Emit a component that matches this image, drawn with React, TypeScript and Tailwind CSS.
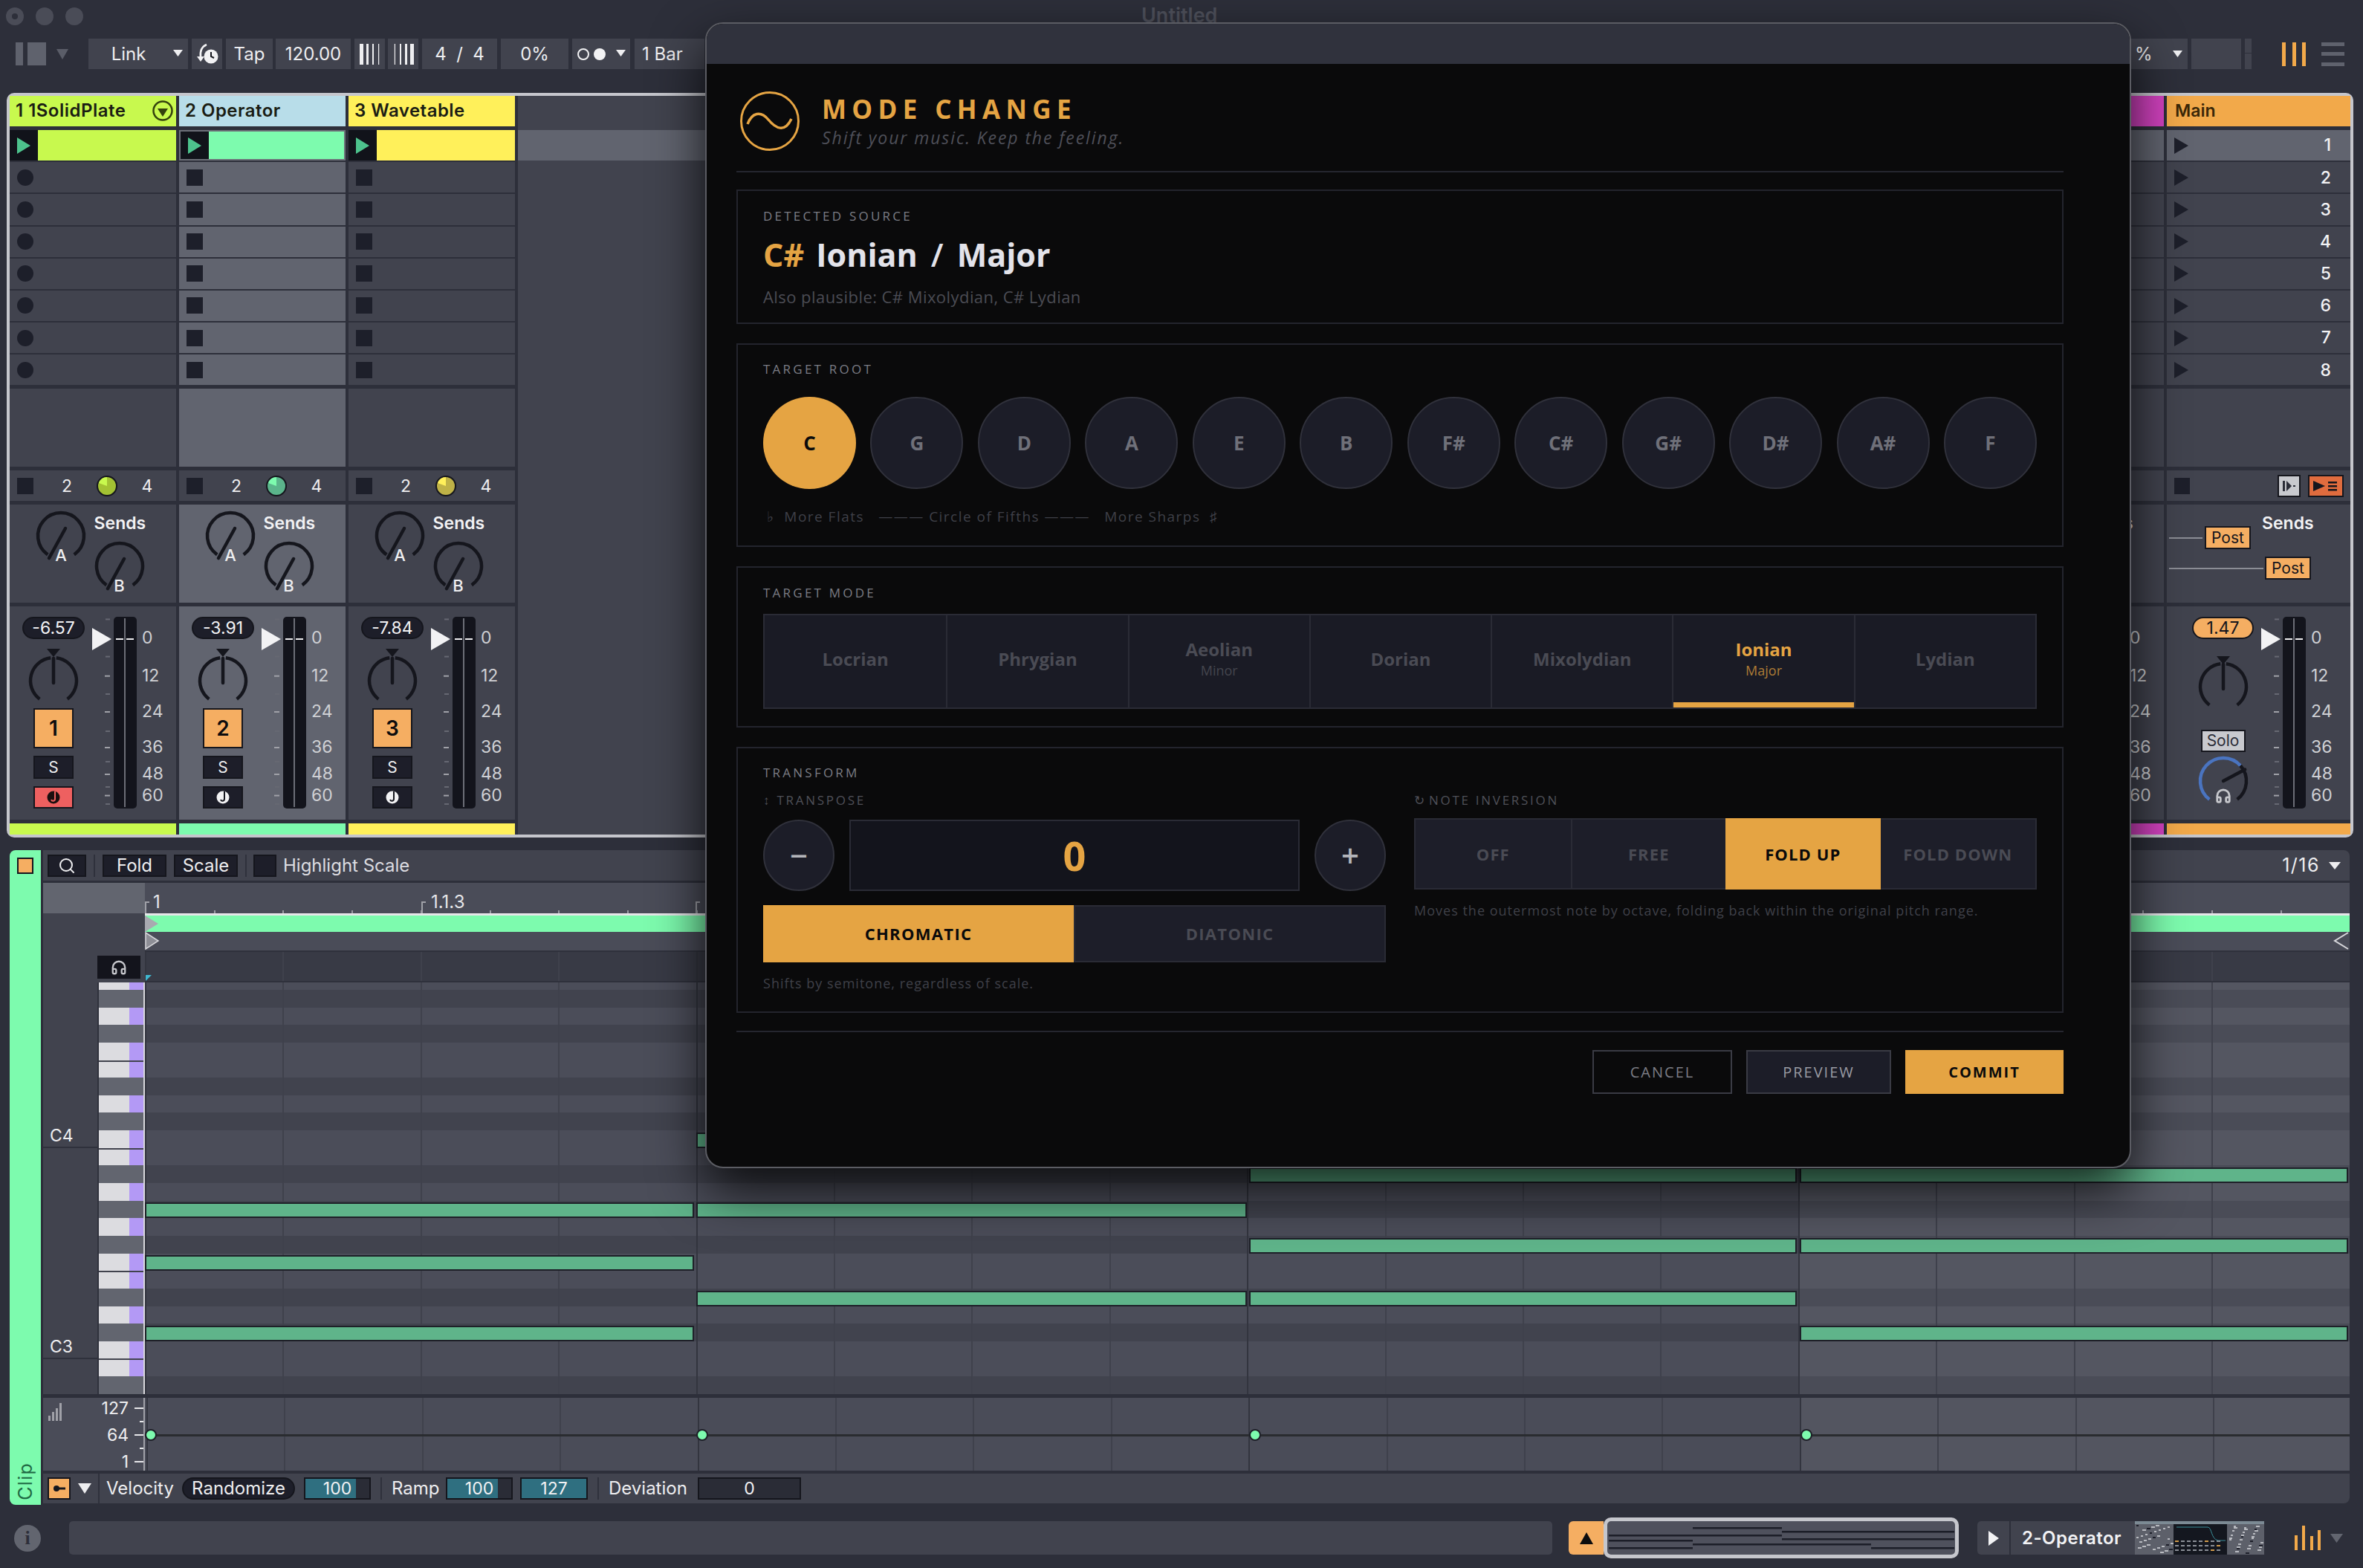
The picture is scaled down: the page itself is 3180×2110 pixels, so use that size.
import React from 'react';
import { Headphones, Search } from 'lucide-react';

// palette
const LIME = '#c8f94e';
const MINT = '#7dfbae';
const YELLOW = '#fff05a';

interface TrackInfo {
  num: string;
  name: string;
  header: string;
  clip: string;
  vol: string;
  slot: 'dot' | 'square' | 'none';
  selected?: boolean;
  armed?: boolean;
  disc: string;
  discHi: string;
}

const tracks: TrackInfo[] = [
  { num: '1', name: '1 1SolidPlate', header: LIME, clip: LIME, vol: '-6.57', slot: 'dot', armed: true, disc: '#a3c233', discHi: '#c8f94e' },
  { num: '2', name: '2 Operator', header: '#b8dde9', clip: MINT, vol: '-3.91', slot: 'square', selected: true, disc: '#5bb48b', discHi: '#7dfbae' },
  { num: '3', name: '3 Wavetable', header: YELLOW, clip: YELLOW, vol: '-7.84', slot: 'square', disc: '#bfb247', discHi: '#fff05a' },
];

const roots = ['C', 'G', 'D', 'A', 'E', 'B', 'F#', 'C#', 'G#', 'D#', 'A#', 'F'];
const modes = [
  { name: 'Locrian' },
  { name: 'Phrygian' },
  { name: 'Aeolian', sub: 'Minor' },
  { name: 'Dorian' },
  { name: 'Mixolydian' },
  { name: 'Ionian', sub: 'Major', active: true },
  { name: 'Lydian' },
];
const inversions = ['OFF', 'FREE', 'FOLD UP', 'FOLD DOWN'];

const keyRows = ['w', 'b', 'w', 'b', 'w', 'w', 'b', 'w', 'b', 'w', 'w', 'b', 'w', 'b', 'w', 'b', 'w', 'w', 'b', 'w', 'b', 'w', 'w', 'b'];
const ROW_H = 23.65;

// [row index, left, width] relative to the grid
const notes: [number, number, number][] = [
  [9, 742, 741],
  [11, 1486, 737],
  [11, 2227, 738],
  [13, 0, 739],
  [13, 742, 741],
  [15, 1486, 737],
  [15, 2227, 738],
  [16, 0, 739],
  [18, 742, 741],
  [18, 1486, 737],
  [20, 0, 739],
  [20, 2227, 738],
];

const dbLabels = [
  { t: '0', y: 28 },
  { t: '12', y: 79 },
  { t: '24', y: 127 },
  { t: '36', y: 175 },
  { t: '48', y: 211 },
  { t: '60', y: 240 },
];
const minorTicks = [3.4, 53.6, 104, 154, 195, 229, 252];
const majorTicks = [79.7, 128, 176, 212, 240.6];

function polar(cx: number, cy: number, r: number, deg: number) {
  const a = ((deg - 90) * Math.PI) / 180;
  return [cx + r * Math.cos(a), cy + r * Math.sin(a)];
}

function arc(cx: number, cy: number, r: number, from: number, to: number) {
  const [x1, y1] = polar(cx, cy, r, from);
  const [x2, y2] = polar(cx, cy, r, to);
  const large = to - from > 180 ? 1 : 0;
  return `M${x1} ${y1} A${r} ${r} 0 ${large} 1 ${x2} ${y2}`;
}

const Knob: React.FC<{ letter: string }> = ({ letter }) => {
  const [px, py] = polar(36, 36, 34, -152);
  return (
    <div className="relative w-[72px] h-[72px]">
      <svg width="72" height="72" fill="none" stroke="#15161d" strokeWidth="4.5">
        <path d={arc(36, 36, 31, -145, 145)} />
        <line x1="42" y1="26" x2={px} y2={py} strokeLinecap="round" />
      </svg>
      <span className="absolute left-0 right-0 top-[49px] text-center text-[22px] leading-[26px] font-medium text-[#eeeef0]">
        {letter}
      </span>
    </div>
  );
};

const PanKnob: React.FC<{ triTop: number; cy: number }> = ({ triTop, cy }) => (
  <svg width="84" height="83" fill="none" stroke="#15161d" strokeWidth="4.5">
    <polygon points={`33,${triTop} 51,${triTop} 42,${triTop + 11}`} fill="#15161d" stroke="none" />
    <path d={arc(42, cy, 31, -143, -7)} />
    <path d={arc(42, cy, 31, 7, 143)} />
    <line x1="42" y1={cy - 30} x2="42" y2={cy + 3} strokeLinecap="round" />
  </svg>
);

const CueKnob: React.FC = () => {
  const [px, py] = polar(42, 35, 33, 62);
  return (
    <div className="relative w-[84px] h-[72px]">
      <svg width="84" height="72" fill="none" strokeWidth="4.5">
        <path d={arc(42, 35, 31, -143, 48)} stroke="#4a74c0" />
        <path d={arc(42, 35, 31, 48, 143)} stroke="#15161d" />
        <line x1="42" y1="35" x2={px} y2={py} stroke="#15161d" strokeLinecap="round" />
      </svg>
      <Headphones className="absolute left-[31px] top-[44px] text-[#c6c7cc]" size={22} strokeWidth={3} />
    </div>
  );
};

const Meter: React.FC = () => (
  <div className="relative w-[31px] h-[258px] rounded-[5px] bg-[#13141c]">
    <div className="absolute left-[14px] top-[2px] bottom-[2px] w-[2px] bg-[#6c6e77]" />
    <div className="absolute left-[3px] top-[29px] w-[10px] h-[2px] bg-[#eeeef0]" />
    <div className="absolute left-[17px] top-[29px] w-[10px] h-[2px] bg-[#eeeef0]" />
  </div>
);

const FaderScale: React.FC = () => (
  <>
    <svg width="29" height="258" className="shrink-0">
      {minorTicks.map((y) => (
        <rect key={y} x="18" y={y - 1} width="6" height="2" fill="#666872" />
      ))}
      {majorTicks.map((y) => (
        <rect key={y} x="17" y={y - 1} width="7" height="2" fill="#a0a1a8" />
      ))}
      <polygon points="0,15 0,45 26,30" fill="#f2f2f4" />
    </svg>
    <Meter />
    <div className="relative w-[40px] h-[258px] ml-[7px]">
      {dbLabels.map((l) => (
        <span
          key={l.t}
          className="absolute left-0 text-[23px] leading-[26px] text-[#cfd0d4]"
          style={{ top: l.y - 13 }}
        >
          {l.t}
        </span>
      ))}
    </div>
  </>
);

const NoteIcon: React.FC<{ red?: boolean }> = ({ red }) => (
  <svg width="20" height="22" viewBox="0 0 20 22">
    <circle cx="10" cy="11" r="8.5" fill={red ? '#1a0f0f' : '#f2f2f4'} />
    <path d="M12 3 L12 13 C12 16 8 17 7 14" fill="none" stroke={red ? '#ee6060' : '#15161d'} strokeWidth="2" />
  </svg>
);

const Slots: React.FC<{ kind: TrackInfo['slot']; bg: string }> = ({ kind, bg }) => (
  <div className="flex flex-col gap-[2px]">
    {[1, 2, 3, 4, 5, 6, 7].map((i) => (
      <div key={i} className={`h-[41.2px] flex items-center pl-[10px] ${bg}`}>
        {kind === 'dot' && <div className="w-[22px] h-[22px] rounded-full bg-[#1d1f2a]" />}
        {kind === 'square' && <div className="w-[22px] h-[22px] bg-[#1d1f2a]" />}
      </div>
    ))}
  </div>
);

const TrackColumn: React.FC<{ t: TrackInfo }> = ({ t }) => {
  const bg = t.selected ? 'bg-[#61646f]' : 'bg-[#41434e]';
  return (
    <div className="w-[224px] shrink-0 flex flex-col font-[Inter,sans-serif]">
      <div className="h-[41px] flex items-center pl-[8px] pr-[3px] justify-between" style={{ background: t.header }}>
        <span className="text-[24px] font-semibold tracking-[0.02em] text-[#1b1d14]">{t.name}</span>
        {t.num === '1' && (
          <svg width="30" height="30">
            <circle cx="15" cy="15" r="12.5" fill="none" stroke="#34420d" strokeWidth="2.5" />
            <polygon points="8,12 22,12 15,23" fill="#34420d" />
          </svg>
        )}
      </div>
      <div className={`h-[41.2px] mt-[5px] flex ${t.selected ? 'bg-[#6d7079] p-[2px]' : ''}`}>
        <div className="w-[38px] shrink-0 bg-[#11131a] flex items-center justify-center">
          <svg width="20" height="24"><polygon points="1,1 1,23 19,12" fill="#4dc38d" /></svg>
        </div>
        <div className="flex-1" style={{ background: t.clip }} />
      </div>
      <div className="mt-[2px]">
        <Slots kind={t.slot} bg={bg} />
      </div>
      <div className={`h-[105px] mt-[5px] ${bg}`} />
      <div className="h-[41px] mt-[5px] flex items-center pl-[10px] bg-[#41434e]">
        <div className="w-[22px] h-[22px] bg-[#1d1f2a]" />
        <span className="ml-[35px] w-[20px] text-center text-[23px] text-[#eeeef0]">2</span>
        <svg width="30" height="30" className="ml-[29px]">
          <circle cx="15" cy="15" r="13" fill={t.disc} stroke="#15161d" strokeWidth="2" />
          <path d="M15 15 L15 3 A12 12 0 0 0 4 11 Z" fill={t.discHi} />
        </svg>
        <span className="ml-[29px] w-[20px] text-center text-[23px] text-[#eeeef0]">4</span>
      </div>
      <div className={`h-[132.5px] mt-[4.5px] flex ${bg}`}>
        <div className="ml-[33px] mt-[6.5px]">
          <Knob letter="A" />
        </div>
        <div className="ml-[6.6px] flex flex-col">
          <span className="mt-[11.5px] pl-[2px] h-[28px] text-[23px] leading-[28px] font-semibold text-[#f2f2f4]">Sends</span>
          <div className="mt-[8px]">
            <Knob letter="B" />
          </div>
        </div>
      </div>
      <div className={`h-[287px] mt-[5px] pt-[14px] pl-[17px] flex ${bg}`}>
        <div className="w-[84px] flex flex-col items-center">
          <div className="w-[84px] h-[30px] rounded-full bg-[#1d1e29] border-2 border-[#15161d] flex items-center justify-center text-[23px] text-[#f2f2f4]">
            {t.vol}
          </div>
          <div className="mt-[8px]">
            <PanKnob triTop={5} cy={48} />
          </div>
          <div className="mt-[2px] w-[54px] h-[54px] bg-[#f5ae62] border-2 border-[#15161d] flex items-center justify-center text-[28px] font-semibold text-[#0c0c0e]">
            {t.num}
          </div>
          <div className="mt-[10px] w-[54px] h-[31px] bg-[#1d1e29] border-2 border-[#15161d] flex items-center justify-center text-[21px] text-[#eeeef0]">
            S
          </div>
          <div className={`mt-[10px] w-[54px] h-[30px] border-2 border-[#15161d] flex items-center justify-center ${t.armed ? 'bg-[#ee6060]' : 'bg-[#1d1e29]'}`}>
            <NoteIcon red={t.armed} />
          </div>
        </div>
        <div className="ml-[10px] flex">
          <FaderScale />
        </div>
      </div>
      <div className="h-[15px] mt-[5px]" style={{ background: t.clip }} />
    </div>
  );
};

const PinkColumn: React.FC = () => (
  <div className="w-[224px] shrink-0 flex flex-col font-[Inter,sans-serif]">
    <div className="h-[41px] bg-[#d342c0]" />
    <div className="h-[41.2px] mt-[5px] bg-[#61646f]" />
    <div className="mt-[2px]">
      <Slots kind="none" bg="bg-[#41434e]" />
    </div>
    <div className="h-[105px] mt-[5px] bg-[#41434e]" />
    <div className="h-[41px] mt-[5px] bg-[#41434e]" />
    <div className="h-[132.5px] mt-[4.5px] bg-[#41434e] flex">
      <span className="ml-[113px] mt-[11.5px] h-[28px] text-[23px] leading-[28px] font-semibold text-[#f2f2f4]">Sends</span>
    </div>
    <div className="h-[287px] mt-[5px] pt-[14px] pl-[111px] flex bg-[#41434e]">
      <FaderScale />
    </div>
    <div className="h-[15px] mt-[5px] bg-[#d342c0]" />
  </div>
);

const MainColumn: React.FC = () => (
  <div className="w-[247px] shrink-0 flex flex-col font-[Inter,sans-serif]">
    <div className="h-[41px] bg-[#f2a94a] flex items-center pl-[11px] text-[23px] font-semibold text-[#3a2708]">Main</div>
    <div className="mt-[5px] flex flex-col gap-[2px]">
      {[1, 2, 3, 4, 5, 6, 7, 8].map((n) => (
        <div
          key={n}
          className={`h-[41.2px] flex items-center justify-between pl-[10px] pr-[26px] ${n === 1 ? 'bg-[#61646f]' : 'bg-[#41434e]'}`}
        >
          <svg width="19" height="24"><polygon points="0,1 0,23 19,12" fill="#1d1f2a" /></svg>
          <span className="text-[23px] font-medium text-[#f2f2f4]">{n}</span>
        </div>
      ))}
    </div>
    <div className="h-[105px] mt-[5px] bg-[#41434e]" />
    <div className="h-[41px] mt-[5px] bg-[#41434e] flex items-center pl-[10px] pr-[9px]">
      <div className="w-[21px] h-[22px] bg-[#1d1f2a]" />
      <div className="ml-auto w-[31px] h-[30px] bg-[#c8c9ce] border-2 border-[#15161d] flex items-center justify-center">
        <svg width="22" height="18" fill="#2b2d38">
          <rect x="2" y="2" width="3" height="14" />
          <polygon points="7,2 14,9 7,16" />
          <rect x="16" y="8" width="3" height="2" />
        </svg>
      </div>
      <div className="ml-[10px] w-[48px] h-[30px] bg-[#e06c3e] border-2 border-[#15161d] flex items-center justify-center">
        <svg width="38" height="18" fill="#15161d">
          <polygon points="2,2 2,16 18,9" />
          <rect x="22" y="3" width="12" height="2.5" />
          <rect x="22" y="8" width="12" height="2.5" />
          <rect x="22" y="13" width="12" height="2.5" />
        </svg>
      </div>
    </div>
    <div className="h-[132.5px] mt-[4.5px] bg-[#41434e] flex flex-col pl-[3px]">
      <div className="relative h-full">
        <span className="absolute left-[125px] top-[11.5px] text-[23px] leading-[28px] font-semibold text-[#f2f2f4]">Sends</span>
        <div className="absolute left-0 top-[44px] w-[45px] h-[2px] bg-[#8b8d95]" />
        <div className="absolute left-[48px] top-[29.5px] w-[62px] h-[31px] bg-[#f5ae62] border-2 border-[#15161d] flex items-center justify-center text-[21px] text-[#15161d]">Post</div>
        <div className="absolute left-0 top-[85px] w-[127px] h-[2px] bg-[#8b8d95]" />
        <div className="absolute left-[129px] top-[70px] w-[62px] h-[31px] bg-[#f5ae62] border-2 border-[#15161d] flex items-center justify-center text-[21px] text-[#15161d]">Post</div>
      </div>
    </div>
    <div className="h-[287px] mt-[5px] pt-[14px] pl-[34px] flex bg-[#41434e]">
      <div className="w-[83px] flex flex-col items-center">
        <div className="w-[83px] h-[30px] rounded-full bg-[#f5ae62] border-2 border-[#15161d] flex items-center justify-center text-[23px] text-[#15161d]">1.47</div>
        <div className="mt-[8px]">
          <PanKnob triTop={15} cy={56} />
        </div>
        <div className="mt-[31px] w-[60px] h-[30px] bg-[#c8c9ce] border-2 border-[#15161d] flex items-center justify-center text-[21px] text-[#2b2d38]">Solo</div>
        <div className="mt-[4px]">
          <CueKnob />
        </div>
      </div>
      <div className="ml-[10px] flex">
        <FaderScale />
      </div>
    </div>
    <div className="h-[15px] mt-[5px] bg-[#f2a94a]" />
  </div>
);

const Chip: React.FC<{ w: string; children?: React.ReactNode; className?: string }> = ({ w, children, className = '' }) => (
  <div className={`${w} h-[41px] bg-[#41434e] flex items-center justify-center text-[24px] text-[#eeeef0] ${className}`}>{children}</div>
);

const Caret: React.FC<{ className?: string }> = ({ className }) => (
  <svg width="13" height="9" className={className}><polygon points="0,0 13,0 6.5,9" fill="#eeeef0" /></svg>
);

const BarsIcon: React.FC<{ flip?: boolean }> = ({ flip }) => (
  <svg width="28" height="28" className={flip ? '-scale-x-100' : ''}>
    <rect x="0" y="0" width="5" height="28" fill="#eeeef0" />
    <rect x="9" y="0" width="3" height="28" fill="#eeeef0" />
    <rect x="17" y="0" width="2" height="28" fill="#eeeef0" />
    <rect x="25" y="0" width="1.2" height="28" fill="#eeeef0" />
  </svg>
);

const Toolbar: React.FC = () => (
  <div className="h-[41px] flex items-center font-[Inter,sans-serif]">
    <div className="ml-[21px] w-[98px] flex items-center">
      <div className="w-[10px] h-[31px] bg-[#5f626d]" />
      <div className="w-[25px] h-[31px] ml-[6px] bg-[#5f626d]" />
      <svg width="16" height="14" className="ml-[14px]"><polygon points="0,0 16,0 8,14" fill="#5a5d68" /></svg>
    </div>
    <Chip w="w-[134px]" className="relative pr-[26px]">
      Link
      <Caret className="absolute right-[7px] top-[15px]" />
    </Chip>
    <Chip w="w-[41px] ml-[5px]">
      <svg width="34" height="34" fill="none">
        <circle cx="22" cy="20" r="9.5" fill="#f2f2f4" />
        <path d="M22 14 V20 L26 22" stroke="#15161d" strokeWidth="2" />
        <path d="M16 4 C9 7 7 13 8 21" stroke="#f2f2f4" strokeWidth="2.5" />
        <polygon points="3,20 13,20 8,27" fill="#f2f2f4" />
      </svg>
    </Chip>
    <Chip w="w-[63px] ml-[5px]">Tap</Chip>
    <Chip w="w-[101px] ml-[4px]">120.00</Chip>
    <Chip w="w-[41px] ml-[5px]"><BarsIcon /></Chip>
    <Chip w="w-[41px] ml-[4px]"><BarsIcon flip /></Chip>
    <Chip w="w-[101px] ml-[5px]"><span className="whitespace-pre">4  /  4</span></Chip>
    <Chip w="w-[91px] ml-[5px]">0%</Chip>
    <Chip w="w-[78px] ml-[5px] relative">
      <svg width="40" height="18" className="absolute left-[7px] top-[12px]" fill="none">
        <circle cx="8" cy="9" r="7" stroke="#f2f2f4" strokeWidth="2" />
        <circle cx="30" cy="9" r="8" fill="#f2f2f4" />
      </svg>
      <Caret className="absolute right-[6px] top-[15px]" />
    </Chip>
    <Chip w="w-[94px] ml-[6px] justify-start pl-[10px]">1 Bar</Chip>
    <div className="flex-1" />
    <Chip w="w-[90px] justify-start pl-[19px] relative">
      %
      <Caret className="absolute right-[7px] top-[16px]" />
    </Chip>
    <Chip w="w-[67px] ml-[5px]" />
    <div className="ml-[5px] w-[9px] h-[41px] flex flex-col gap-[1px]">
      <div className="h-[19px] bg-[#41434e]" />
      <div className="flex-1 bg-[#41434e]" />
    </div>
    <div className="ml-[41px] w-[32px] h-[32px] flex justify-between">
      <div className="w-[5px] bg-[#f2a94a]" />
      <div className="w-[5px] bg-[#f2a94a]" />
      <div className="w-[5px] bg-[#f2a94a]" />
    </div>
    <div className="ml-[21px] w-[31px] h-[32px] flex flex-col justify-between">
      <div className="h-[5px] bg-[#5f626d]" />
      <div className="h-[5px] bg-[#5f626d]" />
      <div className="h-[5px] bg-[#5f626d]" />
    </div>
    <div className="w-[25px]" />
  </div>
);

const GridLines: React.FC = () => (
  <>
    {Array.from({ length: 16 }, (_, i) => (
      <div
        key={i}
        className={`absolute top-0 bottom-0 w-[2px] ${i % 4 === 0 ? 'bg-[#33353f]' : 'bg-[#3f414c]'}`}
        style={{ left: i * 185.4 }}
      />
    ))}
  </>
);

const NoteGrid: React.FC = () => (
  <div className="relative flex-1 h-[554px] flex flex-col overflow-hidden">
    {keyRows.map((k, i) => (
      <div
        key={i}
        className={`w-full ${k === 'w' ? 'bg-[#4b4d59]' : 'bg-[#41434e]'} ${i === 0 ? 'h-[10px]' : 'h-[23.65px]'}`}
      />
    ))}
    <div className="absolute top-0 bottom-0 left-[2227px] right-0 bg-white/[0.05]" />
    <GridLines />
    {notes.map(([row, left, width], i) => (
      <div
        key={i}
        className="absolute h-[21px] bg-[#5fb48a] border-2 border-[#1e2028]"
        style={{ top: 10 + (row - 1) * ROW_H + 2.5, left, width }}
      />
    ))}
  </div>
);

const PianoKeys: React.FC = () => (
  <div className="w-[60px] shrink-0 flex flex-col">
    {keyRows.map((k, i) => {
      const whiteAfterWhite = i > 0 && k === 'w' && keyRows[i - 1] === 'w';
      return (
        <div
          key={i}
          className={`flex ${i === 0 ? 'h-[10px]' : 'h-[23.65px]'} ${whiteAfterWhite ? 'border-t-2 border-[#41434e]' : ''}`}
        >
          {k === 'w' ? (
            <>
              <div className="w-[41px] bg-[#dcdce0]" />
              <div className="flex-1 bg-[#b399f5]" />
            </>
          ) : (
            <div className="flex-1 bg-[#62656f]" />
          )}
        </div>
      );
    })}
  </div>
);

const ValueField: React.FC<{ v: string; w: string; fill: string }> = ({ v, w, fill }) => (
  <div className={`relative ${w} h-[30px] bg-[#2a2c36] border-2 border-[#15161d] flex items-center justify-center text-[23px] text-[#f2f2f4]`}>
    <div className={`absolute left-0 top-0 bottom-0 bg-[#2f6f80] ${fill}`} />
    <span className="relative">{v}</span>
  </div>
);

const DetailView: React.FC = () => (
  <div className="mt-[17px] ml-[13px] w-[3149px] flex font-[Inter,sans-serif]">
    <div className="w-[42px] shrink-0 h-[881px] bg-[#7dfbae] rounded-l-[8px] flex flex-col items-center justify-between pt-[10px] pb-[6px]">
      <div className="w-[22px] h-[22px] bg-[#f5ae62] border-2 border-[#15161d]" />
      <span className="text-[25px] leading-[25px] tracking-[0.05em] text-[#1f6a44] [writing-mode:vertical-rl] rotate-180">Clip</span>
    </div>
    <div className="w-[3px]" />
    <div className="flex-1 flex flex-col">
      <div className="h-[41px] bg-[#41434e] rounded-tr-[8px] flex items-center text-[24px] text-[#eeeef0]">
        <div className="ml-[6px] w-[52px] h-[30px] bg-[#1d1e29] border-2 border-[#15161d] flex items-center justify-center">
          <Search size={24} strokeWidth={2} color="#eeeef0" />
        </div>
        <div className="ml-[10px] w-[2px] h-[30px] bg-[#2f313c]" />
        <div className="ml-[10px] w-[86px] h-[30px] bg-[#1d1e29] border-2 border-[#15161d] flex items-center justify-center">Fold</div>
        <div className="ml-[10px] w-[86px] h-[30px] bg-[#1d1e29] border-2 border-[#15161d] flex items-center justify-center">Scale</div>
        <div className="ml-[10px] w-[2px] h-[30px] bg-[#2f313c]" />
        <div className="ml-[9px] w-[31px] h-[30px] bg-[#1d1e29] border-2 border-[#15161d]" />
        <span className="ml-[9px] text-[#dcdce0]">Highlight Scale</span>
        <span className="ml-auto text-[25px] tracking-[0.06em] text-[#eeeef0]">1/16</span>
        <svg width="16" height="10" className="ml-[12px] mr-[12px]"><polygon points="0,0 16,0 8,10" fill="#eeeef0" /></svg>
      </div>
      {/* ruler */}
      <div className="mt-[3px] h-[41px] flex">
        <div className="w-[137px] bg-[#62656f]" />
        <div className="relative flex-1 bg-[#4a4c58] text-[#e6e6e9] text-[24px]">
          <span className="absolute left-[11px] top-[13px] leading-[26px]">1</span>
          <span className="absolute left-[385px] top-[13px] leading-[26px]">1.1.3</span>
          {[0, 372, 741, 1484, 2227].map((x) => (
            <div key={x} className="absolute bottom-0 w-[6px] h-[16px] border-l-2 border-t-2 border-[#a0a1a8]" style={{ left: x }} />
          ))}
          {Array.from({ length: 32 }, (_, i) => (
            <div key={i} className="absolute bottom-0 w-[2px] h-[4px] bg-[#9a9ba3]" style={{ left: i * 92.7 }} />
          ))}
        </div>
      </div>
      <div className="flex">
        <div className="w-[137px] h-[93px] bg-[#41434e] relative">
          <div className="absolute left-[73px] top-[57px] w-[58px] h-[31px] bg-[#13141c] flex items-center justify-center">
            <Headphones size={22} strokeWidth={2.5} color="#c6c7cc" />
          </div>
        </div>
        <div className="flex-1 flex flex-col">
          <div className="relative h-[25px] bg-[#7dfbae] border-t-[3px] border-[#e6e6e9]">
            <svg width="20" height="22" className="absolute left-0 top-0"><polygon points="0,0 0,22 18,11" fill="#a8a9b0" /></svg>
          </div>
          <div className="relative h-[27px] bg-[#4a4c58] border-b-2 border-[#2f313c]">
            <svg width="20" height="24" className="absolute left-0 top-0"><polygon points="1,1 1,23 18,12" fill="#8d8e96" stroke="#d8d8dc" strokeWidth="1.5" /></svg>
            <svg width="22" height="24" className="absolute right-0 top-0"><path d="M20 1 L2 12 L20 23" fill="none" stroke="#d8d8dc" strokeWidth="2" /></svg>
          </div>
          <div className="relative h-[39px] bg-[#383a45] overflow-hidden">
            <GridLines />
            <svg width="10" height="8" className="absolute left-[1px] bottom-0"><polygon points="0,0 8,0 0,8" fill="#3fb7d0" /></svg>
          </div>
          <div className="h-[2px] bg-[#2f313c]" />
        </div>
      </div>
      {/* piano roll */}
      <div className="flex h-[554px] overflow-hidden">
        <div className="w-[75px] shrink-0 flex flex-col bg-[#41434e] text-[23px] leading-[28px] text-[#eeeef0] border-r-2 border-[#2f313c]">
          <div className="h-[223px] flex items-end pl-[9px] pb-[1px] border-b-2 border-[#2f313c]">C4</div>
          <div className="h-[284px] flex items-end pl-[9px] pb-[1px] border-b-2 border-[#2f313c]">C3</div>
        </div>
        <PianoKeys />
        <div className="w-[2px] shrink-0 bg-[#d8d8dc]" />
        <NoteGrid />
      </div>
      <div className="h-[5px] bg-[#2d2f3a]" />
      {/* velocity lane */}
      <div className="h-[98px] flex bg-[#4a4c58] text-[23px] text-[#eeeef0]">
        <div className="relative w-[137px] shrink-0">
          <svg width="22" height="24" className="absolute left-[7px] top-[7px]" fill="#a0a1a8">
            <rect x="0" y="17" width="3" height="7" />
            <rect x="5" y="12" width="3" height="12" />
            <rect x="10" y="7" width="3" height="17" />
            <rect x="15" y="0" width="3" height="24" />
          </svg>
          <div className="absolute right-[22px] top-0 h-[100px] flex flex-col items-end justify-between leading-[28px]">
            <span>127</span>
            <span>64</span>
            <span>1</span>
          </div>
          <svg width="16" height="98" className="absolute right-0 top-0" fill="#e6e6e9">
            <rect x="2" y="13" width="14" height="2" />
            <rect x="9" y="31" width="7" height="2" />
            <rect x="2" y="49" width="14" height="2" />
            <rect x="9" y="67" width="7" height="2" />
            <rect x="2" y="85" width="14" height="2" />
          </svg>
        </div>
        <div className="relative flex-1 border-l-2 border-[#a0a1a8] -ml-[2px]">
          <div className="absolute top-0 bottom-0 left-[2229px] right-0 bg-white/[0.05]" />
          <div className="absolute inset-y-0 left-[2px] right-0">
            <GridLines />
          </div>
          <div className="absolute left-0 right-0 top-[49px] h-[3px] bg-[#2a2c30]" />
          {[0, 742, 1486, 2228].map((x) => (
            <div key={x} className="absolute top-[42px] w-[16px] h-[16px] rounded-full bg-[#7dfbae] border-2 border-[#1e2028]" style={{ left: x }} />
          ))}
        </div>
      </div>
      <div className="h-[4px] bg-[#2d2f3a]" />
      {/* velocity tools */}
      <div className="h-[40px] bg-[#41434e] flex items-center text-[24px] text-[#eeeef0] rounded-br-[8px]">
        <div className="ml-[6px] w-[31px] h-[30px] bg-[#f5ae62] border-2 border-[#15161d] flex items-center justify-center">
          <svg width="20" height="14"><circle cx="6" cy="7" r="4" fill="#15161d" /><rect x="6" y="5.5" width="12" height="3" fill="#15161d" /></svg>
        </div>
        <svg width="18" height="14" className="ml-[10px]"><polygon points="0,0 18,0 9,14" fill="#eeeef0" /></svg>
        <div className="ml-[9px] w-[2px] h-[40px] bg-[#2f313c]" />
        <span className="ml-[9px] w-[93px] whitespace-nowrap">Velocity</span>
        <div className="ml-[9px] w-[152px] h-[30px] rounded-full bg-[#1d1e29] border-2 border-[#15161d] flex items-center justify-center">Randomize</div>
        <div className="ml-[12px]"><ValueField v="100" w="w-[90px]" fill="w-[68px]" /></div>
        <div className="ml-[13px] w-[2px] h-[30px] bg-[#2f313c]" />
        <span className="ml-[13px] w-[62px]">Ramp</span>
        <div className="ml-[11px]"><ValueField v="100" w="w-[90px]" fill="w-[68px]" /></div>
        <div className="ml-[10px]"><ValueField v="127" w="w-[91px]" fill="w-full" /></div>
        <div className="ml-[13px] w-[2px] h-[30px] bg-[#2f313c]" />
        <span className="ml-[13px] w-[110px]">Deviation</span>
        <div className="ml-[10px]"><ValueField v="0" w="w-[139px]" fill="w-0" /></div>
      </div>
    </div>
  </div>
);

const overviewNotes: [number, number, number][] = [
  [0, 113, 26], [0, 113, 33], [0, 113, 43],
  [113, 120, 16], [113, 120, 26], [113, 120, 38],
  [233, 120, 21], [233, 120, 31], [233, 120, 38],
  [353, 112, 21], [353, 112, 31], [353, 112, 43],
];

const thumbCells = Array.from({ length: 60 }, (_, i) => i);

const DeviceThumb: React.FC = () => (
  <svg width="174" height="45" className="shrink-0">
    <rect x="0" y="0" width="52" height="45" fill="#5d606a" />
    <rect x="52" y="0" width="72" height="45" fill="#14171f" />
    <rect x="124" y="0" width="50" height="45" fill="#5d606a" />
    <rect x="0" y="0" width="174" height="4" fill="#7c8a94" />
    {thumbCells.map((i) => (
      <rect
        key={i}
        x={i % 2 === 0 ? 2 + ((i * 7) % 48) : 126 + ((i * 17) % 44)}
        y={5 + ((i * 13) % 38)}
        width={3 + (i % 3)}
        height="2"
        fill={i % 5 === 0 ? '#1d1f2a' : '#b8bac0'}
      />
    ))}
    <path d="M56 8 H98 C104 8 102 24 112 26 H122" fill="none" stroke="#3a8f9a" strokeWidth="1" />
    {thumbCells.slice(0, 24).map((i) => (
      <rect key={i} x={54 + (i % 8) * 8} y={26 + (i % 3) * 6} width="5" height="2" fill={i % 7 === 0 ? '#d09a4a' : '#8a8e96'} />
    ))}
  </svg>
);

const StatusBar: React.FC = () => (
  <div className="mt-[22px] h-[45px] flex items-center font-[Inter,sans-serif]">
    <div className="ml-[19px] w-[36px] h-[36px] rounded-full bg-[#62656f] flex items-center justify-center text-[26px] font-bold leading-none text-[#2d2f3a] font-[Liberation_Serif,serif]">
      i
    </div>
    <div className="ml-[38px] w-[1996px] h-[45px] rounded-[5px] bg-[#41434e]" />
    <div className="ml-[22px] w-[47px] h-[45px] bg-[#f5ae62] rounded-l-[6px] flex items-center justify-center">
      <svg width="18" height="16"><polygon points="9,0 18,16 0,16" fill="#0c0c0e" /></svg>
    </div>
    <div className="relative w-[478px] h-[55px] bg-[#4f515d] border-[5px] border-[#c5c6cc] rounded-[10px]">
      <svg width="468" height="45" className="absolute left-0 top-0">
        {overviewNotes.map(([x, w, y], i) => (
          <rect key={i} x={x + 2} y={y - 8} width={w} height="2.5" fill="#1c1e28" />
        ))}
      </svg>
    </div>
    <div className="ml-[25px] w-[386px] h-[45px] rounded-l-[5px] bg-[#41434e] flex items-center">
      <div className="w-[45px] h-full flex items-center justify-center border-r-2 border-[#2d2f3a]">
        <svg width="14" height="20"><polygon points="0,0 14,10 0,20" fill="#f2f2f4" /></svg>
      </div>
      <span className="ml-[15px] w-[152px] text-[24px] tracking-[0.02em] font-semibold text-[#f2f2f4]">2-Operator</span>
      <DeviceThumb />
    </div>
    <div className="ml-[41px] w-[35px] h-[33px] flex items-end justify-between">
      <div className="w-[4px] h-[20px] bg-[#f2a94a]" />
      <div className="w-[4px] h-[33px] bg-[#f2a94a]" />
      <div className="w-[4px] h-[19px] bg-[#f2a94a]" />
      <div className="w-[4px] h-[27px] bg-[#f2a94a]" />
    </div>
    <svg width="17" height="12" className="ml-[13px]"><polygon points="0,0 17,0 8.5,12" fill="#62656f" /></svg>
  </div>
);

const Section: React.FC<{ h: string; children: React.ReactNode; className?: string }> = ({ h, children, className = '' }) => (
  <div className={`${h} border-2 border-[#23242d] px-[34px] ${className}`}>{children}</div>
);

const Label: React.FC<{ children: React.ReactNode }> = ({ children }) => (
  <div className="h-[20px] text-[17px] leading-[20px] tracking-[0.19em] uppercase text-[#7b7c84]">{children}</div>
);

const SubLabel: React.FC<{ children: React.ReactNode }> = ({ children }) => (
  <div className="h-[20px] text-[17px] leading-[20px] tracking-[0.16em] uppercase text-[#4f5058]">{children}</div>
);

const Modal: React.FC = () => (
  <div className="absolute left-[949px] top-[30px] w-[1919px] h-[1542px] rounded-[24px] overflow-hidden border-2 border-[#5b5c63] bg-[#0a0a0b] shadow-[0_30px_70px_rgba(0,0,0,0.8)] font-['Open_Sans',sans-serif]">
    <div className="h-[54px] bg-[#30323d]" />
    <div className="pl-[40px] pr-[89px]">
      {/* header */}
      <div className="h-[146px] pt-[37px] border-b-2 border-[#25262f] flex">
        <svg width="80" height="80" fill="none" stroke="#e5a443" className="ml-[5px] shrink-0">
          <circle cx="40" cy="40" r="38.5" strokeWidth="3" />
          <path d="M10 44 C 16 28, 28 26, 38 38 S 60 56, 69 37" strokeWidth="3.5" />
        </svg>
        <div className="ml-[30px]">
          <div className="mt-[4px] text-[35px] leading-[40px] font-bold tracking-[0.21em] text-[#e5a443]">MODE CHANGE</div>
          <div className="mt-[3px] text-[23px] leading-[30px] italic tracking-[0.083em] text-[#4e4f58]">Shift your music. Keep the feeling.</div>
        </div>
      </div>
      <Section h="h-[181px] mt-[23px]" className="pt-[24px]">
        <Label>Detected Source</Label>
        <div className="mt-[14px] h-[56px] text-[43px] leading-[56px] font-bold text-[#e3e3ea] whitespace-pre">
          <span className="text-[#e5a443] mr-[5px]">C#</span> Ionian<span className="font-semibold mx-[18px]">/</span>Major
        </div>
        <div className="mt-[14px] text-[22px] leading-[28px] tracking-[0.02em] text-[#4b4c54]">Also plausible: C# Mixolydian, C# Lydian</div>
      </Section>
      <Section h="h-[274px] mt-[26px]" className="pt-[23px]">
        <Label>Target Root</Label>
        <div className="mt-[27px] flex justify-between">
          {roots.map((r) => (
            <div
              key={r}
              className={`w-[125px] h-[124px] rounded-full flex items-center justify-center text-[26px] font-bold ${
                r === 'C' ? 'bg-[#e5a443] text-[#0a0a0b]' : 'bg-[#1c1d28] border-2 border-[#30313b] text-[#6f7079]'
              }`}
            >
              {r}
            </div>
          ))}
        </div>
        <div className="mt-[25px] pl-[5px] h-[24px] text-[19px] leading-[24px] tracking-[0.078em] text-[#3f4048] whitespace-pre">
          ♭  More Flats   ——— Circle of Fifths ———   More Sharps  ♯
        </div>
      </Section>
      <Section h="h-[217px] mt-[26px]" className="pt-[24px]">
        <Label>Target Mode</Label>
        <div className="mt-[18px] h-[128px] bg-[#1a1b25] border-2 border-[#2a2b35] grid grid-cols-7">
          {modes.map((m, i) => (
            <div
              key={m.name}
              className={`relative flex flex-col items-center justify-center pb-[6px] ${i > 0 ? 'border-l-2 border-[#2a2b35]' : ''}`}
            >
              <span className={`text-[24px] leading-[30px] font-bold ${m.active ? 'text-[#e5a443]' : 'text-[#4a4b54]'}`}>{m.name}</span>
              {m.sub && (
                <span className={`text-[18px] leading-[26px] ${m.active ? 'text-[#ad7c36]' : 'text-[#44454d]'}`}>{m.sub}</span>
              )}
              {m.active && <div className="absolute left-0 right-0 bottom-0 h-[7px] bg-[#e5a443]" />}
            </div>
          ))}
        </div>
      </Section>
      <Section h="h-[358px] mt-[26px]" className="pt-[23px]">
        <Label>Transform</Label>
        <div className="mt-[17px] grid grid-cols-2 gap-[38px]">
          <div>
            <SubLabel>
              <span className="mr-[10px] tracking-normal">↕</span>Transpose
            </SubLabel>
            <div className="mt-[16px] flex gap-[20px]">
              <div className="w-[96px] h-[96px] shrink-0 rounded-full bg-[#1c1d28] border-2 border-[#30313b] flex items-center justify-center text-[42px] font-semibold leading-none text-[#b4b5bb]">−</div>
              <div className="flex-1 h-[96px] bg-[#13141c] border-2 border-[#2a2b35] flex items-center justify-center text-[54px] font-bold text-[#e5a443]">0</div>
              <div className="w-[96px] h-[96px] shrink-0 rounded-full bg-[#1c1d28] border-2 border-[#30313b] flex items-center justify-center text-[42px] font-semibold leading-none text-[#b4b5bb]">+</div>
            </div>
            <div className="mt-[19px] flex h-[77px] text-[22px] font-bold tracking-[0.06em]">
              <div className="w-[418px] bg-[#e5a443] flex items-center justify-center text-[#0a0a0b]">CHROMATIC</div>
              <div className="flex-1 bg-[#1d1e29] border-2 border-[#2a2b35] flex items-center justify-center text-[#4a4b54]">DIATONIC</div>
            </div>
            <div className="mt-[16px] text-[18px] leading-[24px] tracking-[0.056em] text-[#3f4048]">Shifts by semitone, regardless of scale.</div>
          </div>
          <div>
            <SubLabel>
              <span className="mr-[6px] tracking-normal">↻</span>Note Inversion
            </SubLabel>
            <div className="mt-[14px] h-[96px] grid grid-cols-4 bg-[#1d1e29] border-2 border-[#2a2b35] text-[22px] font-bold tracking-[0.05em]">
              {inversions.map((v, i) => (
                <div
                  key={v}
                  className={`flex items-center justify-center ${
                    v === 'FOLD UP'
                      ? 'bg-[#e5a443] text-[#0a0a0b] -my-[2px]'
                      : `text-[#4a4b54] ${i === 1 ? 'border-l-2 border-[#2a2b35]' : ''}`
                  }`}
                >
                  {v}
                </div>
              ))}
            </div>
            <div className="mt-[16px] text-[18px] leading-[24px] tracking-[0.056em] text-[#3f4048] whitespace-nowrap">
              Moves the outermost note by octave, folding back within the original pitch range.
            </div>
          </div>
        </div>
      </Section>
      <div className="mt-[24px] border-t-2 border-[#25262f] pt-[24px] flex justify-end gap-[19px] text-[20px] tracking-[0.1em]">
        <div className="w-[188px] h-[59px] border-2 border-[#3a3b44] flex items-center justify-center text-[#7b7c84]">CANCEL</div>
        <div className="w-[195px] h-[59px] border-2 border-[#3a3b44] bg-[#1c1d28] flex items-center justify-center text-[#9a9ba3]">PREVIEW</div>
        <div className="w-[213px] h-[59px] bg-[#e5a443] flex items-center justify-center font-bold text-[#0a0a0b]">COMMIT</div>
      </div>
    </div>
  </div>
);

const App: React.FC = () => {
  return (
    <div className="relative w-[3180px] h-[2110px] overflow-hidden bg-[#2d2f3a]">
      <div className="h-[52px] flex items-start pt-[10px] pl-[8px] gap-[16px] relative">
        <div className="w-[24px] h-[24px] rounded-full bg-[#4a4c57] flex items-center justify-center">
          <div className="w-[8px] h-[8px] rounded-full bg-[#2d2f3a]" />
        </div>
        <div className="w-[24px] h-[24px] rounded-full bg-[#4a4c57]" />
        <div className="w-[24px] h-[24px] rounded-full bg-[#4a4c57]" />
        <span className="absolute left-[1536px] top-[5px] text-[27px] leading-[32px] font-semibold text-[#4e505b] font-[Inter,sans-serif]">Untitled</span>
      </div>
      <Toolbar />
      <div className="mt-[32px] ml-[9px] w-[3158px] h-[1002px] rounded-[10px] border-4 border-[#c5c6cc] bg-[#2d2f3a] flex gap-[4px]">
        {tracks.map((t) => (
          <TrackColumn key={t.num} t={t} />
        ))}
        <div className="flex-1 bg-[#41434e]">
          <div className="mt-[46px] h-[41px] bg-[#61646f]" />
        </div>
        <PinkColumn />
        <MainColumn />
      </div>
      <DetailView />
      <StatusBar />
      <Modal />
    </div>
  );
};

export default App;
